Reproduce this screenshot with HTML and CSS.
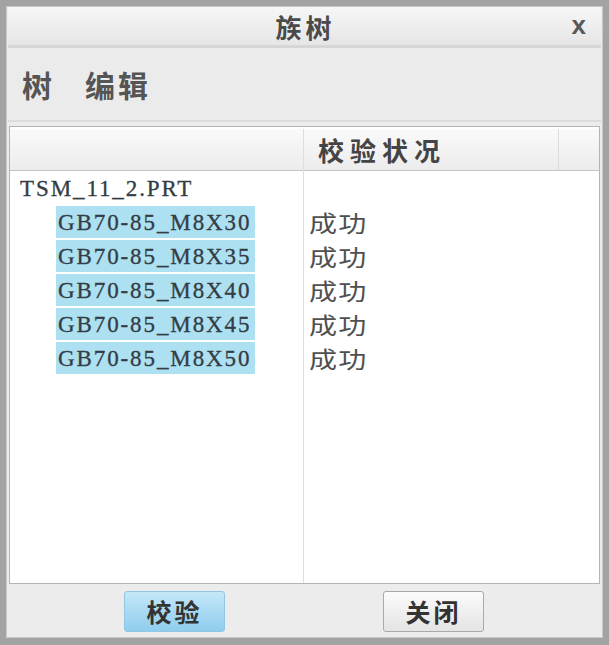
FILE: index.html
```html
<!DOCTYPE html>
<html lang="zh-CN">
<head>
    <meta charset="utf-8">
    <title>族树</title>
    <link rel="stylesheet" href="styles.css">
</head>
<body>
    <div class="dialog">
        <div class="titlebar">
            <span class="title">族树</span>
            <span class="close">x</span>
        </div>
        <div class="menubar">
            <span class="menu">树</span>
            <span class="menu">编辑</span>
        </div>
        <div class="table">
            <div class="thead">
                <div class="th tree-col"></div>
                <div class="th status-col">校验状况</div>
                <div class="th rest-col"></div>
            </div>
            <div class="tbody">
                <div class="col tree-col">
                    <div class="row root">TSM_11_2.PRT</div>
                    <div class="row child"><span class="sel">GB70-85_M8X30</span></div>
                    <div class="row child"><span class="sel">GB70-85_M8X35</span></div>
                    <div class="row child"><span class="sel">GB70-85_M8X40</span></div>
                    <div class="row child"><span class="sel">GB70-85_M8X45</span></div>
                    <div class="row child"><span class="sel">GB70-85_M8X50</span></div>
                </div>
                <div class="col status-col">
                    <div class="row"></div>
                    <div class="row"><span class="status">成功</span></div>
                    <div class="row"><span class="status">成功</span></div>
                    <div class="row"><span class="status">成功</span></div>
                    <div class="row"><span class="status">成功</span></div>
                    <div class="row"><span class="status">成功</span></div>
                </div>
            </div>
        </div>
        <div class="buttons">
            <button class="btn primary">校验</button>
            <button class="btn">关闭</button>
        </div>
    </div>
</body>
</html>
```

FILE: styles.css
```css
body {
    margin: 0;
    background-color: #9e9e9e;
    font-family: "Noto Sans CJK SC", "Liberation Sans", sans-serif;
}

.dialog {
    width: 609px;
    height: 645px;
    box-sizing: border-box;
    border: 6px solid #a3a3a3;
    border-bottom-width: 7px;
    box-shadow: inset 1px 1px 0 #c9c9c9, inset -1px -1px 0 #c9c9c9;
    background-color: #ececec;
    display: flex;
    flex-direction: column;
}

.titlebar {
    height: 38px;
    display: flex;
    align-items: center;
    justify-content: center;
    position: relative;
    background: linear-gradient(#f6f6f6, #e6e6e6);
    border-bottom: 3px solid #d6d6d6;
    margin: 1px 2px 0 2px;
}

.title {
    font-size: 26px;
    font-weight: bold;
    letter-spacing: 4px;
    color: #4a4a4a;
    margin-left: 2px;
}

.close {
    position: absolute;
    right: 15px;
    top: 3px;
    font-family: "Liberation Sans", sans-serif;
    font-size: 26px;
    font-weight: bold;
    color: #5a5a5a;
}

.menubar {
    height: 72px;
    display: flex;
    align-items: center;
    gap: 30px;
    padding-left: 14px;
    margin: 0 2px;
    background-color: #ebebeb;
    border-bottom: 2px solid #dcdcdc;
}

.menu {
    font-size: 30px;
    font-weight: bold;
    letter-spacing: 3px;
    color: #555;
}

.table {
    margin: 4px 3px 0 3px;
    height: 456px;
    border: 1px solid #b4b4b4;
    background-color: #fff;
    display: flex;
    flex-direction: column;
}

.thead {
    height: 41px;
    display: flex;
    margin-top: 2px;
    background: linear-gradient(#fafafa, #ececec);
    border-bottom: 1px solid #c3c3c3;
}

.th {
    box-sizing: border-box;
    font-size: 26px;
    font-weight: bold;
    letter-spacing: 6px;
    color: #444;
    line-height: 41px;
    padding-left: 14px;
}

.tree-col {
    width: 293px;
    box-sizing: border-box;
}

.status-col {
    width: 255px;
    box-sizing: border-box;
    border-left: 1px solid #dedede;
}

.rest-col {
    flex: 1;
    border-left: 1px solid #dcdcdc;
}

.tbody {
    flex: 1;
    display: flex;
    margin-top: -2px;
}

.row {
    height: 34px;
    line-height: 1;
    display: flex;
    align-items: center;
}

.root {
    padding-left: 10px;
    margin-top: 2px;
}

.root, .sel {
    font-family: "Liberation Serif", serif;
    font-size: 23px;
    letter-spacing: 1.9px;
    color: #333c45;
    -webkit-text-stroke: 0.3px #333c45;
}

.child {
    padding-left: 46px;
}

.sel {
    display: inline-block;
    height: 32px;
    line-height: 33px;
    padding: 0 4px 0 2px;
    background-color: #ade0f0;
}

.status-col .row {
    padding-left: 5px;
}

.status-col .row:first-child {
    margin-top: 2px;
}

.status {
    display: inline-block;
    font-size: 23px;
    line-height: 26px;
    letter-spacing: 1px;
    color: #505050;
    transform: scaleX(1.22);
    transform-origin: left center;
}

.buttons {
    flex: 1;
    display: flex;
    align-items: center;
    padding-left: 118px;
    gap: 158px;
}

.btn {
    width: 101px;
    height: 41px;
    font-family: "Noto Sans CJK SC", sans-serif;
    font-size: 25px;
    font-weight: bold;
    letter-spacing: 3px;
    color: #333;
    border: 1px solid #a9a9a9;
    border-radius: 3px;
    background: linear-gradient(#fbfbfb, #e4e4e4);
    padding: 0;
}

.btn.primary {
    border-color: #92c7e4;
    background: linear-gradient(#c4e7f8, #8fcdee);
}
```
